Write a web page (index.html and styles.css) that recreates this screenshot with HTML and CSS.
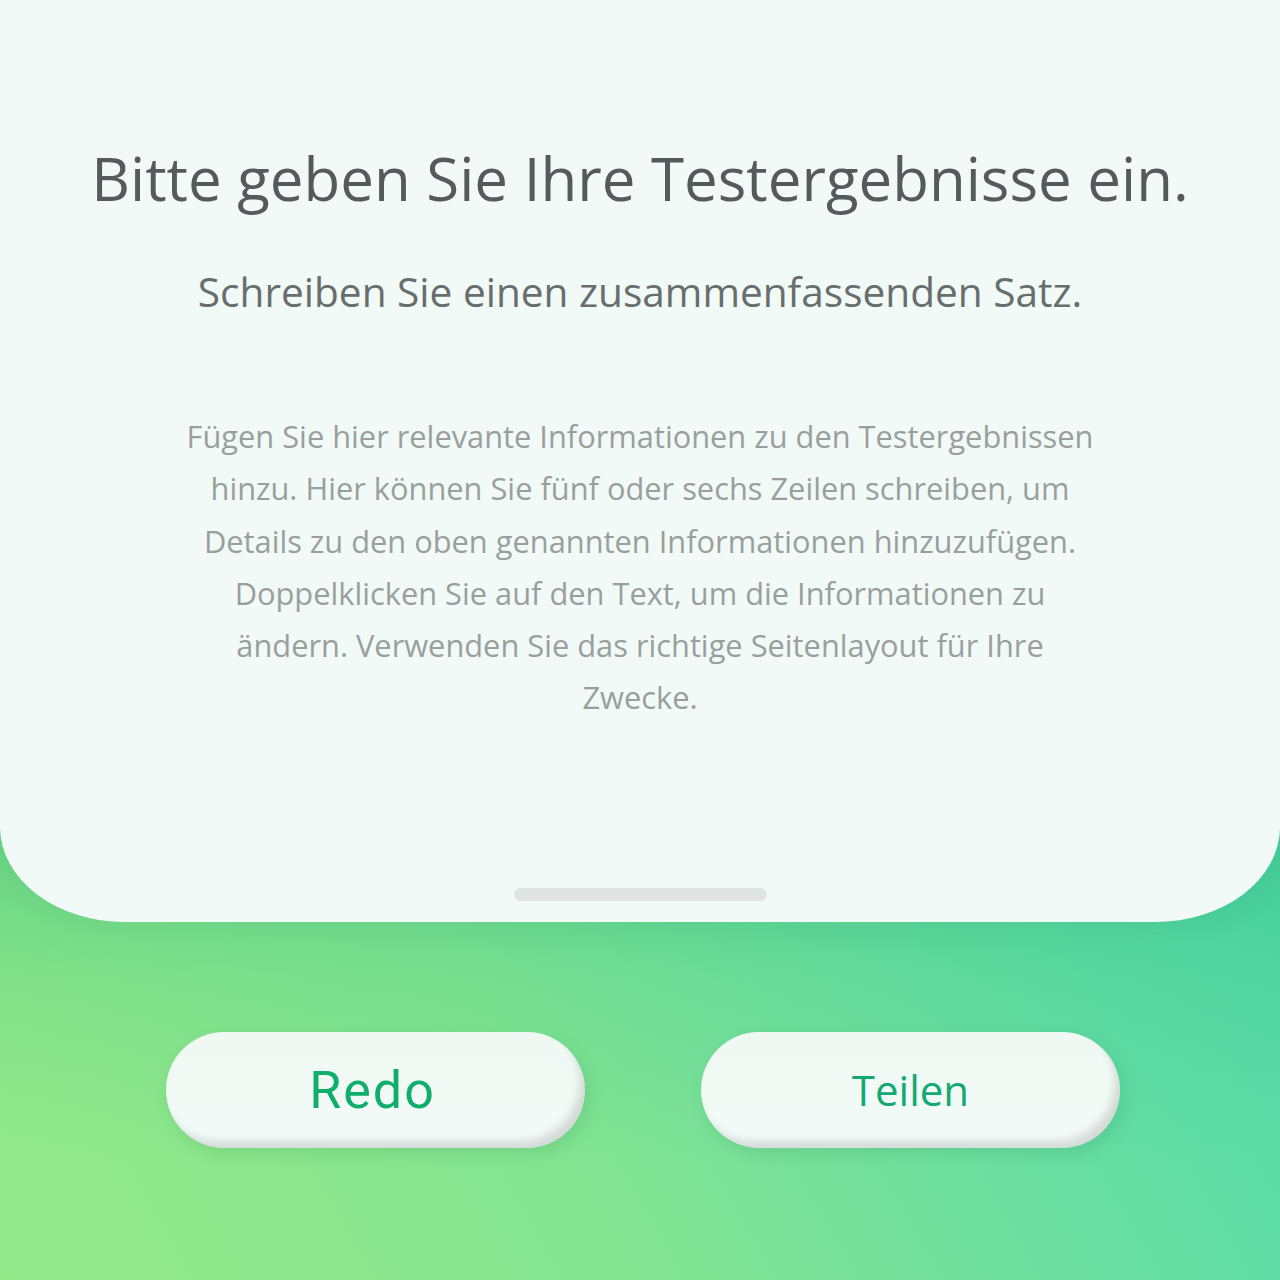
FILE: index.html
```html
<!DOCTYPE html>
<html lang="de">
<head>
<meta charset="utf-8">
<link rel="stylesheet" href="styles.css">
</head>
<body>
<div class="screen">
  <section class="card">
    <h1 class="title">Bitte geben Sie Ihre Testergebnisse ein.</h1>
    <p class="subtitle">Schreiben Sie einen zusammenfassenden Satz.</p>
    <p class="body">Fügen Sie hier relevante Informationen zu den Testergebnissen<br>hinzu. Hier können Sie fünf oder sechs Zeilen schreiben, um<br>Details zu den oben genannten Informationen hinzuzufügen.<br>Doppelklicken Sie auf den Text, um die Informationen zu<br>ändern. Verwenden Sie das richtige Seitenlayout für Ihre<br>Zwecke.</p>
    <div class="handle"></div>
  </section>
  <div class="actions">
    <button class="btn btn-redo">Redo</button>
    <button class="btn btn-share">Teilen</button>
  </div>
</div>
</body>
</html>
```
FILE: styles.css
```css
html, body {
  margin: 0;
  padding: 0;
}
body {
  width: 1280px;
  height: 1280px;
  overflow: hidden;
  font-family: "Open Sans", "Noto Sans", sans-serif;
}
.screen {
  width: 1280px;
  height: 1280px;
  display: flex;
  flex-direction: column;
  background:
    linear-gradient(180deg, rgba(30, 180, 120, 0.36) 0%, rgba(30, 180, 120, 0.12) 45%, rgba(30, 180, 120, 0) 100%) 0 830px / 100% 330px no-repeat,
    linear-gradient(60deg, #93e98a 0%, #8fe78b 10%, #83e492 32%, #78e19a 42%, #5fdca6 64%, #56d9a8 75%, #50d6a8 100%);
}
.card {
  position: relative;
  z-index: 1;
  height: 922px;
  flex: none;
  box-sizing: border-box;
  background: #f1faf7;
  border-radius: 0 0 125px 125px / 0 0 95px 95px;
  box-shadow: 0 6px 30px rgba(0, 90, 50, 0.06);
  display: flex;
  flex-direction: column;
  align-items: center;
  padding-top: 138px;
}
.title {
  margin: 0;
  font-weight: 400;
  font-size: 60px;
  line-height: 80px;
  color: #555b5a;
}
.subtitle {
  margin: 46px 0 0;
  font-size: 40.6px;
  line-height: 56px;
  color: #686e6d;
}
.body {
  margin: 90px 0 0;
  font-size: 30.8px;
  line-height: 52.3px;
  color: #9a9f9e;
  text-align: center;
}
.handle {
  margin-top: auto;
  margin-bottom: 21px;
  width: 253px;
  height: 13px;
  border-radius: 7px;
  background: #dfe3e1;
}
.actions {
  display: flex;
  justify-content: center;
  gap: 116px;
  padding-top: 110px;
  padding-left: 6px;
}
.btn {
  width: 419px;
  height: 116px;
  border: none;
  border-radius: 58px;
  background: linear-gradient(180deg, #eff8f3 0%, #f3fbf8 100%);
  box-shadow: inset -7px -9px 8px -2px rgba(0, 0, 0, 0.13), 4px 6px 16px rgba(20, 110, 60, 0.14);
  cursor: pointer;
  padding: 0;
}
.btn-redo {
  font-family: "Roboto", sans-serif;
  font-size: 52px;
  letter-spacing: 2px;
  color: #0fae6c;
  padding-right: 6px;
}
.btn-share {
  font-family: "Open Sans", sans-serif;
  font-size: 42px;
  color: #14a873;
  padding-bottom: 2px;
}
```
